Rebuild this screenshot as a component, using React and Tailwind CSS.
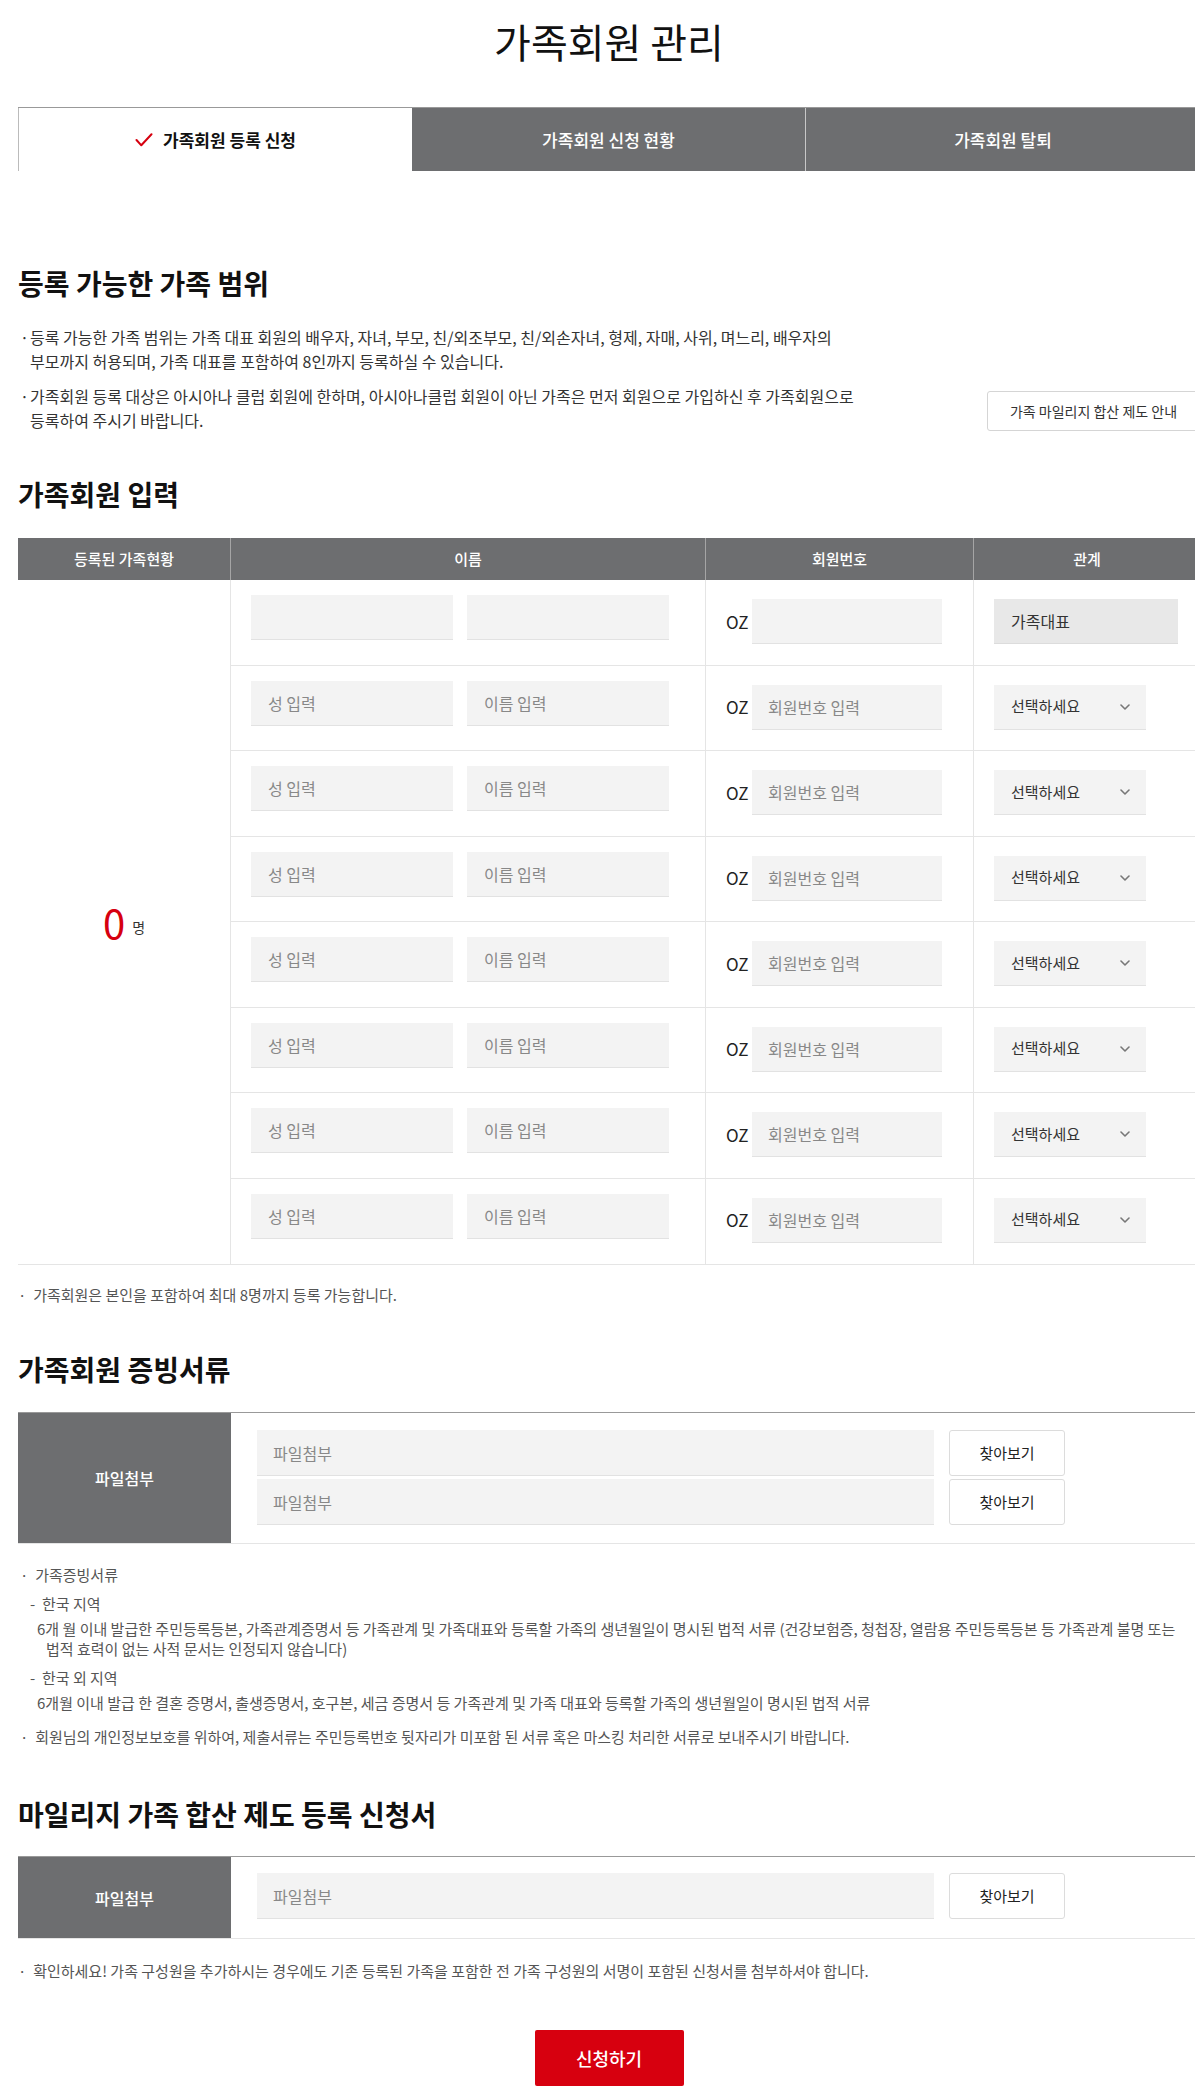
import React from 'react';

const rows = Array.from({ length: 7 });

function Chevron() {
    return (
        <svg className="w-[10px] h-[6px]" viewBox="0 0 10 6" fill="none">
            <path d="M1 1l4 4 4-4" stroke="#777" strokeWidth="1.6" strokeLinecap="round" strokeLinejoin="round" />
        </svg>
    );
}

function NameInputs({ empty }) {
    return (
        <div className="flex gap-[14px]">
            <div className="w-[202px] h-[45px] bg-[#f3f3f3] border-b border-[#e2e2e2] flex items-center pl-[17px] text-[16px] text-[#888]">
                {empty ? '' : '성 입력'}
            </div>
            <div className="w-[202px] h-[45px] bg-[#f3f3f3] border-b border-[#e2e2e2] flex items-center pl-[17px] text-[16px] text-[#888]">
                {empty ? '' : '이름 입력'}
            </div>
        </div>
    );
}

function MemberInput({ empty }) {
    return (
        <div className="flex items-center gap-[5px]">
            <span className="w-[21px] text-[17px] text-[#222]">OZ</span>
            <div className="w-[190px] h-[45px] bg-[#f3f3f3] border-b border-[#e2e2e2] flex items-center pl-[16px] text-[16px] text-[#888]">
                {empty ? '' : '회원번호 입력'}
            </div>
        </div>
    );
}

function Row({ first }) {
    return (
        <div className="flex h-[85.5px] border-b border-[#e5e5e5]">
            <div className="w-[475px] border-r border-[#e5e5e5] pl-[20px] pt-[15px]">
                <NameInputs empty={first} />
            </div>
            <div className="w-[268px] border-r border-[#e5e5e5] pl-[20px] pt-[19px]">
                <MemberInput empty={first} />
            </div>
            <div className="w-[226px] pl-[20px] pt-[19px]">
                {first ? (
                    <div className="w-[184px] h-[45px] bg-[#e8e8e8] border-b border-[#dcdcdc] flex items-center pl-[17px] text-[16px] text-[#333]">
                        가족대표
                    </div>
                ) : (
                    <div className="w-[152px] h-[45px] bg-[#f3f3f3] border-b border-[#e2e2e2] flex items-center justify-between pl-[17px] pr-[16px] text-[15px] text-[#333]">
                        <span>선택하세요</span>
                        <Chevron />
                    </div>
                )}
            </div>
        </div>
    );
}

function FileRow() {
    return (
        <div className="flex gap-[15px]">
            <div className="w-[677px] h-[46px] bg-[#f3f3f3] border-b border-[#e2e2e2] flex items-center pl-[16px] text-[16px] text-[#888]">
                파일첨부
            </div>
            <button className="w-[116px] h-[46px] bg-white border border-[#dcdcdc] rounded-[3px] text-[15px] text-[#222]">
                찾아보기
            </button>
        </div>
    );
}

export default function App() {
    return (
        <div className="w-full overflow-x-hidden bg-white font-['Noto_Sans_CJK_KR','Noto_Sans',sans-serif] text-[#222]">
            <div className="w-[1182px] ml-[18px] pb-[15px]">
                {/* Page title */}
                <h1 className="pt-[17px] text-center text-[40px] leading-[48px] font-normal text-[#111]">
                    가족회원 관리
                </h1>

                {/* Tabs */}
                <div className="mt-[42px] flex h-[64px] border-t border-[#999]">
                    <div className="w-[394px] bg-white border-l border-[#bbb] flex items-center justify-center gap-[10px]">
                        <svg className="w-[18px] h-[14px]" viewBox="0 0 18 14" fill="none">
                            <path d="M1.5 7l4.8 5.3L16.5 1.2" stroke="#d6000f" strokeWidth="2" strokeLinecap="round" strokeLinejoin="round" />
                        </svg>
                        <span className="text-[17px] font-bold text-[#111]">가족회원 등록 신청</span>
                    </div>
                    <div className="w-[394px] bg-[#6d6e70] flex items-center justify-center text-[17px] font-medium text-white border-r border-[#c8c8c8]">
                        가족회원 신청 현황
                    </div>
                    <div className="w-[394px] bg-[#6d6e70] flex items-center justify-center text-[17px] font-medium text-white">
                        가족회원 탈퇴
                    </div>
                </div>

                {/* 등록 가능한 가족 범위 */}
                <h2 className="mt-[95px] text-[28px] leading-[34px] font-bold text-[#111]">등록 가능한 가족 범위</h2>
                <div className="mt-[25px] flex items-end justify-between">
                    <ul className="w-[872px] flex flex-col gap-[11px] text-[16px] leading-[24px] text-[#333] break-keep">
                        <li className="flex">
                            <span className="w-[12px] pl-[2px] shrink-0">·</span>
                            <span>등록 가능한 가족 범위는 가족 대표 회원의 배우자, 자녀, 부모, 친/외조부모, 친/외손자녀, 형제, 자매, 사위, 며느리, 배우자의 부모까지 허용되며, 가족 대표를 포함하여 8인까지 등록하실 수 있습니다.</span>
                        </li>
                        <li className="flex">
                            <span className="w-[12px] pl-[2px] shrink-0">·</span>
                            <span>가족회원 등록 대상은 아시아나 클럽 회원에 한하며, 아시아나클럽 회원이 아닌 가족은 먼저 회원으로 가입하신 후 가족회원으로 등록하여 주시기 바랍니다.</span>
                        </li>
                    </ul>
                    <button className="w-[213px] h-[40px] bg-white border border-[#d5d5d5] rounded-[3px] text-[14px] text-[#333] mb-[1px]">
                        가족 마일리지 합산 제도 안내
                    </button>
                </div>

                {/* 가족회원 입력 */}
                <h2 className="mt-[45px] text-[28px] leading-[34px] font-bold text-[#111]">가족회원 입력</h2>
                <div className="mt-[27px]">
                    <div className="flex h-[42px] bg-[#6d6e70] text-white text-[15px] font-medium">
                        <div className="w-[213px] flex items-center justify-center border-r border-[#a5a5a5]">등록된 가족현황</div>
                        <div className="w-[475px] flex items-center justify-center border-r border-[#a5a5a5]">이름</div>
                        <div className="w-[268px] flex items-center justify-center border-r border-[#a5a5a5]">회원번호</div>
                        <div className="w-[226px] flex items-center justify-center">관계</div>
                    </div>
                    <div className="flex border-b border-[#e5e5e5]">
                        <div className="w-[213px] border-r border-[#e5e5e5] flex items-center justify-center">
                            <span className="text-[40px] leading-none font-normal text-[#d6000f]">0</span>
                            <span className="ml-[7px] mt-[10px] text-[14px] text-[#333]">명</span>
                        </div>
                        <div className="flex-1 [&>div:last-child]:border-b-0">
                            <Row first />
                            {rows.map((_, i) => (
                                <Row key={i} />
                            ))}
                        </div>
                    </div>
                    <p className="mt-[20px] text-[15px] leading-[20px] text-[#555]">· &nbsp;가족회원은 본인을 포함하여 최대 8명까지 등록 가능합니다.</p>
                </div>

                {/* 가족회원 증빙서류 */}
                <h2 className="mt-[47px] text-[28px] leading-[34px] font-bold text-[#111]">가족회원 증빙서류</h2>
                <div className="mt-[26px] flex border-t border-[#999] border-b border-b-[#e5e5e5]">
                    <div className="w-[213px] bg-[#6d6e70] flex items-center justify-center text-[16px] font-medium text-white">
                        파일첨부
                    </div>
                    <div className="pl-[26px] pt-[17px] pb-[18px] flex flex-col gap-[3px]">
                        <FileRow />
                        <FileRow />
                    </div>
                </div>
                <div className="mt-[21px] text-[15px] leading-[20px] text-[#555] break-keep">
                    <p className="pl-[2px]">· &nbsp;가족증빙서류</p>
                    <p className="mt-[9px] pl-[12px]">- &nbsp;한국 지역</p>
                    <p className="mt-[5px] pl-[28px] -indent-[9px]">6개 월 이내 발급한 주민등록등본, 가족관계증명서 등 가족관계 및 가족대표와 등록할 가족의 생년월일이 명시된 법적 서류 (건강보험증, 청첩장, 열람용 주민등록등본 등 가족관계 불명 또는 법적 효력이 없는 사적 문서는 인정되지 않습니다)</p>
                    <p className="mt-[9px] pl-[12px]">- &nbsp;한국 외 지역</p>
                    <p className="mt-[5px] pl-[19px]">6개월 이내 발급 한 결혼 증명서, 출생증명서, 호구본, 세금 증명서 등 가족관계 및 가족 대표와 등록할 가족의 생년월일이 명시된 법적 서류</p>
                    <p className="mt-[14px] pl-[2px]">· &nbsp;회원님의 개인정보보호를 위하여, 제출서류는 주민등록번호 뒷자리가 미포함 된 서류 혹은 마스킹 처리한 서류로 보내주시기 바랍니다.</p>
                </div>

                {/* 마일리지 가족 합산 제도 등록 신청서 */}
                <h2 className="mt-[50px] text-[28px] leading-[34px] font-bold text-[#111]">마일리지 가족 합산 제도 등록 신청서</h2>
                <div className="mt-[25px] flex border-t border-[#999] border-b border-b-[#e5e5e5]">
                    <div className="w-[213px] bg-[#6d6e70] flex items-center justify-center text-[16px] font-medium text-white">
                        파일첨부
                    </div>
                    <div className="pl-[26px] pt-[16px] pb-[19px]">
                        <FileRow />
                    </div>
                </div>
                <p className="mt-[22px] text-[15px] leading-[20px] text-[#555]">· &nbsp;확인하세요! 가족 구성원을 추가하시는 경우에도 기존 등록된 가족을 포함한 전 가족 구성원의 서명이 포함된 신청서를 첨부하셔야 합니다.</p>

                <div className="mt-[49px] flex justify-center">
                    <button className="w-[149px] h-[56px] bg-[#d7000f] rounded-[2px] text-white text-[18px] font-medium">
                        신청하기
                    </button>
                </div>
            </div>
        </div>
    );
}
